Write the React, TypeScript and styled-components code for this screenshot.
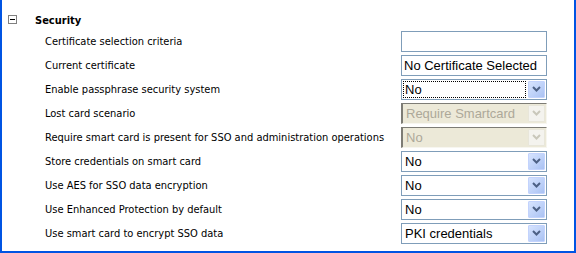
import * as React from 'react'
import styled, { createGlobalStyle, css } from 'styled-components'

const GlobalStyle = createGlobalStyle`
    html, body {
        margin: 0;
        padding: 0;
        background: #ffffff;
    }
`

type Setting = {
    label: string
    kind: 'input' | 'select'
    value: string
    disabled?: boolean
    focused?: boolean
}

const settings: Setting[] = [
    { label: 'Certificate selection criteria', kind: 'input', value: '' },
    { label: 'Current certificate', kind: 'input', value: 'No Certificate Selected' },
    { label: 'Enable passphrase security system', kind: 'select', value: 'No', focused: true },
    { label: 'Lost card scenario', kind: 'select', value: 'Require Smartcard', disabled: true },
    {
        label: 'Require smart card is present for SSO and administration operations',
        kind: 'select',
        value: 'No',
        disabled: true,
    },
    { label: 'Store credentials on smart card', kind: 'select', value: 'No' },
    { label: 'Use AES for SSO data encryption', kind: 'select', value: 'No' },
    { label: 'Use Enhanced Protection by default', kind: 'select', value: 'No' },
    { label: 'Use smart card to encrypt SSO data', kind: 'select', value: 'PKI credentials' },
]

function Chevron({ disabled }: { disabled?: boolean }) {
    return (
        <svg width="9" height="6" viewBox="0 0 9 6">
            <path
                d="M1 1 L4.5 4.5 L8 1"
                fill="none"
                stroke={disabled ? '#c9c7ba' : '#4d6185'}
                strokeWidth="2"
            />
        </svg>
    )
}

function SelectBox({ value, disabled, focused }: Setting) {
    return (
        <Select $disabled={disabled}>
            <SelectValue $disabled={disabled} $focused={focused}>
                {value}
            </SelectValue>
            <DropButton $disabled={disabled}>
                <Chevron disabled={disabled} />
            </DropButton>
        </Select>
    )
}

export default function App() {
    return (
        <>
            <GlobalStyle />
            <Frame>
                <SectionHeader>
                    <Toggle />
                    <SectionTitle>Security</SectionTitle>
                </SectionHeader>
                {settings.map((s) => (
                    <Row key={s.label}>
                        <Label>{s.label}</Label>
                        {s.kind === 'input' ? (
                            <TextInput>{s.value}</TextInput>
                        ) : (
                            <SelectBox {...s} />
                        )}
                    </Row>
                ))}
            </Frame>
        </>
    )
}

const Frame = styled.div`
    box-sizing: border-box;
    width: 576px;
    height: 253px;
    border: 2px solid #0054e3;
    border-top: none;
    background: #ffffff;
    padding-right: 27px;
`

const SectionHeader = styled.div`
    display: flex;
    align-items: center;
    height: 29px;
    padding-left: 6px;
    padding-top: 11px;
    box-sizing: border-box;
`

const Toggle = styled.div`
    position: relative;
    box-sizing: border-box;
    width: 9px;
    height: 9px;
    margin-top: -2px;
    border: 1px solid #808080;
    background: #ffffff;

    &::after {
        content: '';
        position: absolute;
        left: 1px;
        right: 1px;
        top: 3px;
        height: 1px;
        background: #000000;
    }
`

const SectionTitle = styled.span`
    margin-left: 18px;
    font-family: 'DejaVu Sans Condensed', 'DejaVu Sans', sans-serif;
    font-stretch: condensed;
    font-weight: bold;
    font-size: 11px;
    color: #000000;
`

const Row = styled.div`
    display: flex;
    align-items: center;
    height: 24px;
`

const Label = styled.div`
    flex: 1;
    padding-left: 43px;
    font-family: 'DejaVu Sans Condensed', 'DejaVu Sans', sans-serif;
    font-stretch: condensed;
    font-size: 11px;
    color: #000000;
    white-space: nowrap;
`

const controlBox = css`
    box-sizing: border-box;
    width: 146px;
    height: 21px;
    font-family: 'Liberation Sans', Arial, sans-serif;
    font-size: 13px;
`

const TextInput = styled.div`
    ${controlBox};
    border: 1px solid #7f9db9;
    padding: 0 2px;
    line-height: 19px;
    color: #000000;
    white-space: nowrap;
    overflow: hidden;
`

const Select = styled.div<{ $disabled?: boolean }>`
    ${controlBox};
    display: flex;
    align-items: stretch;
    ${(p) =>
        p.$disabled
            ? css`
                  background: #ece9d8;
                  border-top: 1px solid #7d7c75;
                  border-left: 2px solid #7d7c75;
                  border-right: 1px solid #f7f6f0;
                  border-bottom: 1px solid #f7f6f0;
              `
            : css`
                  background: #ffffff;
                  border: 1px solid #7f9db9;
              `}
`

const SelectValue = styled.div<{ $disabled?: boolean; $focused?: boolean }>`
    flex: 1;
    min-width: 0;
    padding-left: 2px;
    line-height: 17px;
    color: ${(p) => (p.$disabled ? '#aca899' : '#000000')};
    outline: ${(p) => (p.$focused ? '1px dotted #000000' : 'none')};
    outline-offset: -1px;
    margin: 1px;
    white-space: nowrap;
    overflow: hidden;
`

const DropButton = styled.div<{ $disabled?: boolean }>`
    box-sizing: border-box;
    width: 17px;
    margin: 1px;
    display: flex;
    align-items: center;
    justify-content: center;
    border-radius: 1px;
    ${(p) =>
        p.$disabled
            ? css`
                  background: #f4f3ee;
                  border: 1px solid #e8e6da;
              `
            : css`
                  background: linear-gradient(135deg, #d6e3fe 0%, #bcd0f8 60%, #a9c1f2 100%);
                  border: 1px solid #c3d3fd;
              `}
`
